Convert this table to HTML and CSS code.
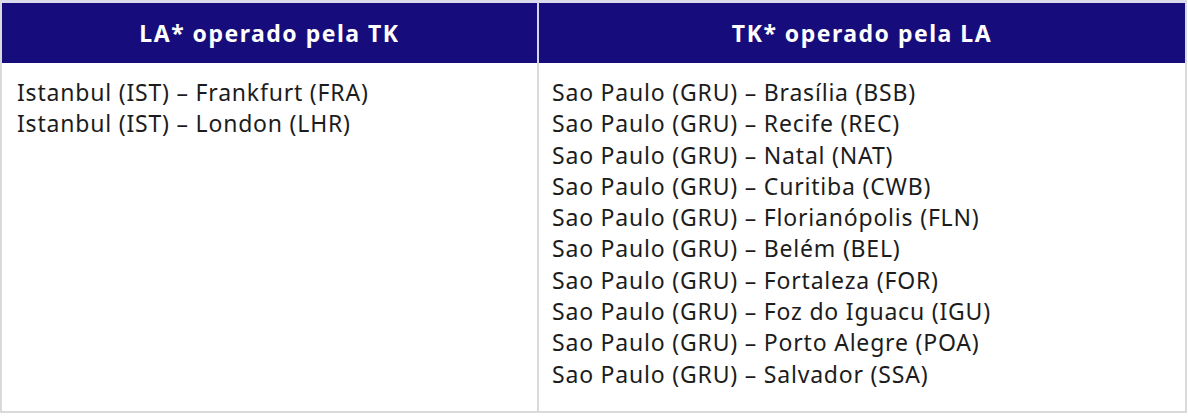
FILE: index.html
```html
<!DOCTYPE html>
<html lang="pt">
<head>
<meta charset="utf-8">
<link rel="stylesheet" href="styles.css">
</head>
<body>
<div class="routes">
  <div class="head">LA* operado pela TK</div>
  <div class="head head-right">TK* operado pela LA</div>
  <div class="cell">
    <div>Istanbul (IST) – Frankfurt (FRA)</div>
    <div>Istanbul (IST) – London (LHR)</div>
  </div>
  <div class="cell cell-right">
    <div>Sao Paulo (GRU) – Brasília (BSB)</div>
    <div>Sao Paulo (GRU) – Recife (REC)</div>
    <div>Sao Paulo (GRU) – Natal (NAT)</div>
    <div>Sao Paulo (GRU) – Curitiba (CWB)</div>
    <div>Sao Paulo (GRU) – Florianópolis (FLN)</div>
    <div>Sao Paulo (GRU) – Belém (BEL)</div>
    <div>Sao Paulo (GRU) – Fortaleza (FOR)</div>
    <div>Sao Paulo (GRU) – Foz do Iguacu (IGU)</div>
    <div>Sao Paulo (GRU) – Porto Alegre (POA)</div>
    <div>Sao Paulo (GRU) – Salvador (SSA)</div>
  </div>
</div>
</body>
</html>
```
FILE: styles.css
```css
html, body {
  margin: 0;
  padding: 0;
  background: #ffffff;
}
.routes {
  width: 1183px;
  display: grid;
  grid-template-columns: 535px 1fr;
  border: 2px solid #dadada;
  border-top: 3px solid #dcdbee;
  font-family: "Noto Sans", "Open Sans", sans-serif;
}
.head {
  background: #170c7c;
  color: #ffffff;
  font-weight: 700;
  font-size: 23px;
  height: 60px;
  display: flex;
  align-items: center;
  justify-content: center;
  letter-spacing: 1.5px;
}
.head-right {
  border-left: 2px solid #d6d4ea;
}
.cell {
  padding: 14px 15px 21px 15px;
  font-size: 23px;
  line-height: 31.3px;
  letter-spacing: 0.8px;
  color: #1c1c1c;
}
.cell-right {
  border-left: 2px solid #dadada;
  padding-left: 13px;
}
```
